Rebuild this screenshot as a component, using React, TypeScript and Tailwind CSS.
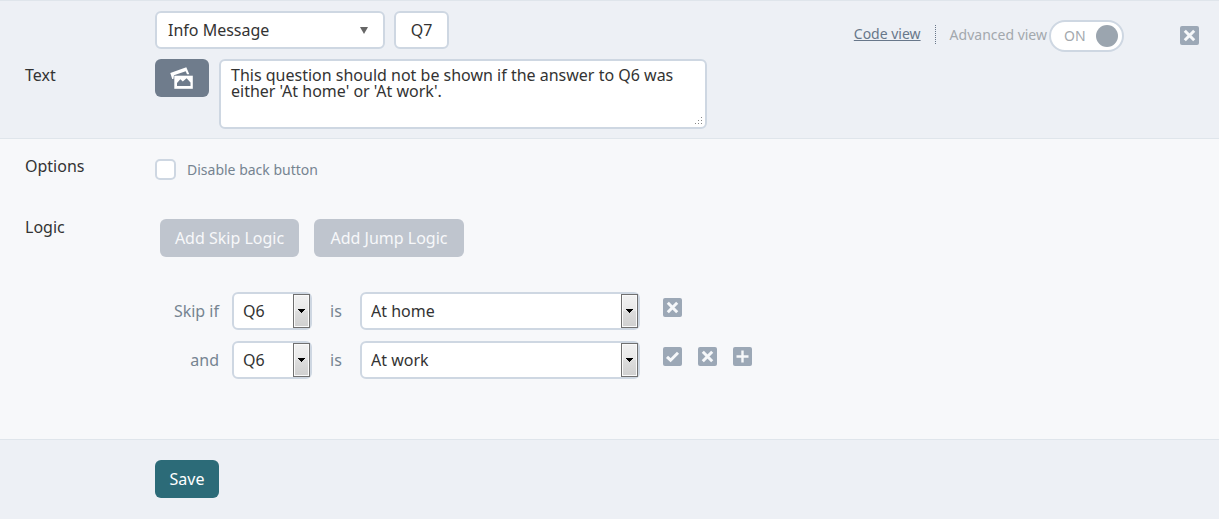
import { useState } from "react";
import type { ReactNode } from "react";

const fieldStyle = "h-[38px] rounded-md border-2 border-[#ced7e2] bg-white text-base text-[#333]";

function IconButton({ label, children }: { label: string; children: ReactNode }) {
  return (
    <button type="button" aria-label={label} className="block size-[19px] shrink-0 rounded-xs bg-[#9ca8b6]">
      <svg viewBox="0 0 19 19" className="size-full" fill="none" stroke="#f6f8fa" strokeWidth="3">
        {children}
      </svg>
    </button>
  );
}

function RemoveButton({ label }: { label: string }) {
  return (
    <IconButton label={label}>
      <path d="M4.8 4.8L14.2 14.2M14.2 4.8L4.8 14.2" />
    </IconButton>
  );
}

function ClassicSelect({ label, options, width }: { label: string; options: string[]; width: string }) {
  return (
    <div className={`relative shrink-0 ${width}`}>
      <select aria-label={label} className={`${fieldStyle} w-full appearance-none pl-[9px] pr-6 leading-[34px]`}>
        {options.map((option) => (
          <option key={option}>{option}</option>
        ))}
      </select>
      <svg viewBox="0 0 18 34" className="pointer-events-none absolute right-px top-0.5 h-[34px] w-[18px]">
        <defs>
          <linearGradient id="arrow-face" x1="0" y1="0" x2="0" y2="1">
            <stop offset="0" stopColor="#f2f2f2" />
            <stop offset="0.5" stopColor="#e8e8e8" />
            <stop offset="0.5" stopColor="#dddddd" />
            <stop offset="1" stopColor="#cfcfcf" />
          </linearGradient>
        </defs>
        <rect x="0.5" y="0.5" width="16" height="33" fill="url(#arrow-face)" stroke="#707070" />
        <rect x="1.5" y="1.5" width="14" height="31" fill="none" stroke="#fafafa" />
        <path d="M5 15H12V16H11V17H10V18H9V19H8V18H7V17H6V16H5Z" fill="#000" />
      </svg>
    </div>
  );
}

function LogicRow({ prefix, answers, children }: { prefix: string; answers: string[]; children: ReactNode }) {
  return (
    <div className="flex items-center">
      <span className="w-16 text-right text-[#768491]">{prefix}</span>
      <div className="ml-[13px] flex">
        <ClassicSelect label={`${prefix} question`} options={["Q6", "Q5"]} width="w-20" />
      </div>
      <span className="w-12 text-center text-[#768491]">is</span>
      <ClassicSelect label={`${prefix} answer`} options={answers} width="w-[280px]" />
      <div className="ml-[23px] flex gap-4 pb-2">{children}</div>
    </div>
  );
}

export default function App() {
  const [advanced, setAdvanced] = useState(true);
  const [text, setText] = useState(
    "This question should not be shown if the answer to Q6 was either 'At home' or 'At work'.",
  );

  return (
    <form className="min-h-screen bg-[#edf0f5] font-['Noto_Sans',sans-serif] text-base leading-6 text-[#333]">
      <section className="border-y border-[#dfe5eb] pt-2.5 pb-[9px] pl-[155px] pr-5">
        <div className="flex h-[38px] items-start">
          <div className="relative w-[230px] shrink-0">
            <select aria-label="Question type" className={`${fieldStyle} w-full appearance-none pl-[11px] pr-8`}>
              <option>Info Message</option>
              <option>Multiple choice</option>
            </select>
            <svg viewBox="0 0 8 7" className="pointer-events-none absolute right-[17px] top-4 h-[7px] w-2">
              <path d="M0 0H8L4 7Z" fill="#666" />
            </svg>
          </div>
          <input
            aria-label="Question number"
            defaultValue="Q7"
            className={`${fieldStyle} ml-[9px] w-[55px] shrink-0 text-center`}
          />
          <div className="ml-auto flex items-center pt-[9px] text-sm">
            <div className="flex items-center pb-1">
              <a href="#code" className="text-[#68778a] underline">
                Code view
              </a>
              <span className="mx-3.5 h-[19px] border-l border-dotted border-[#68778a]" />
            </div>
            <label htmlFor="advanced" className="pb-0.5 text-[#a3a8ad]">
              Advanced view
            </label>
            <label className="relative ml-0.5 flex h-8 w-[75px] items-center justify-between rounded-full border-2 border-[#ced7e2] bg-white pl-[13px] pr-1 text-[#a3a8ad]">
              <input
                id="advanced"
                type="checkbox"
                role="switch"
                className="sr-only"
                checked={advanced}
                onChange={(event) => setAdvanced(event.target.checked)}
              />
              {advanced ? "ON" : "OFF"}
              <span className="size-[22px] rounded-full bg-[#9ba5af]" />
            </label>
            <div className="ml-14 pb-0.5">
              <RemoveButton label="Remove question" />
            </div>
          </div>
        </div>
        <div className="mt-2.5 flex items-start">
          <label htmlFor="question-text" className="-ml-[130px] w-[130px] pt-1">
            Text
          </label>
          <button
            type="button"
            aria-label="Insert image"
            className="flex h-[38px] w-[54px] shrink-0 items-center justify-center rounded-md bg-[#6f7c8c]"
          >
            <svg viewBox="0 0 24 24" className="size-6">
              <path d="M0.3 7L16.3 1.2L19.3 8.2H17L15.7 5.2L4 9.3L3.4 13H2.2Z" fill="#fff" />
              <path d="M4.3 9.7H22.8V22.8H4.3Z" fill="#fff" />
              <path d="M7 20V17L10.3 13.2L12.8 15.6L16.6 12.2L20.5 16.4V20Z" fill="#6f7c8c" />
            </svg>
          </button>
          <div className="relative ml-2.5 w-[488px]">
            <textarea
              id="question-text"
              value={text}
              onChange={(event) => setText(event.target.value)}
              className="block h-[70px] w-full resize-none rounded-md border-2 border-[#ced7e2] bg-white py-1.5 pl-2.5 pr-4 leading-4"
            />
            <svg viewBox="0 0 8 8" className="pointer-events-none absolute bottom-1 right-1 size-2" fill="#888">
              <path d="M6 0H7V1H6ZM3 3H4V4H3ZM6 3H7V4H6ZM0 6H1V7H0ZM3 6H4V7H3ZM6 6H7V7H6Z" />
            </svg>
          </div>
        </div>
      </section>

      <section className="border-b border-[#dfe5eb] bg-[#f7f8fa] pt-[15px] pb-[60px] pl-[25px]">
        <div className="flex items-start">
          <span className="w-[130px]">Options</span>
          <label className="flex items-center gap-[11px] pt-[5px] text-sm text-[#768491]">
            <input
              type="checkbox"
              className="size-[21px] appearance-none rounded-[5px] border-2 border-[#ced7e2] bg-white checked:bg-[#6f7c8c]"
            />
            Disable back button
          </label>
        </div>
        <div className="mt-[35px] flex items-start">
          <span className="w-[130px]">Logic</span>
          <div className="flex gap-[15px] pl-[5px] pt-1 text-[#f7f8fa]">
            <button type="button" className="h-[38px] w-[139px] rounded-md bg-[#bfc5ce]">
              Add Skip Logic
            </button>
            <button type="button" className="h-[38px] w-[150px] rounded-md bg-[#bfc5ce]">
              Add Jump Logic
            </button>
          </div>
        </div>
        <div className="mt-[35px] flex flex-col gap-[11px] pl-[130px]">
          <LogicRow prefix="Skip if" answers={["At home", "At work"]}>
            <RemoveButton label="Remove first condition" />
          </LogicRow>
          <LogicRow prefix="and" answers={["At work", "At home"]}>
            <IconButton label="Confirm condition">
              <path d="M4 9.8L7.6 13.2L15 5.8" />
            </IconButton>
            <RemoveButton label="Remove second condition" />
            <IconButton label="Add condition">
              <path d="M9.5 3.5V15.5M3.5 9.5H15.5" strokeWidth="2.4" />
            </IconButton>
          </LogicRow>
        </div>
      </section>

      <footer className="py-5 pl-[155px]">
        <button type="submit" className="h-[38px] w-16 rounded-md bg-[#2c6b78] text-white">
          Save
        </button>
      </footer>
    </form>
  );
}
